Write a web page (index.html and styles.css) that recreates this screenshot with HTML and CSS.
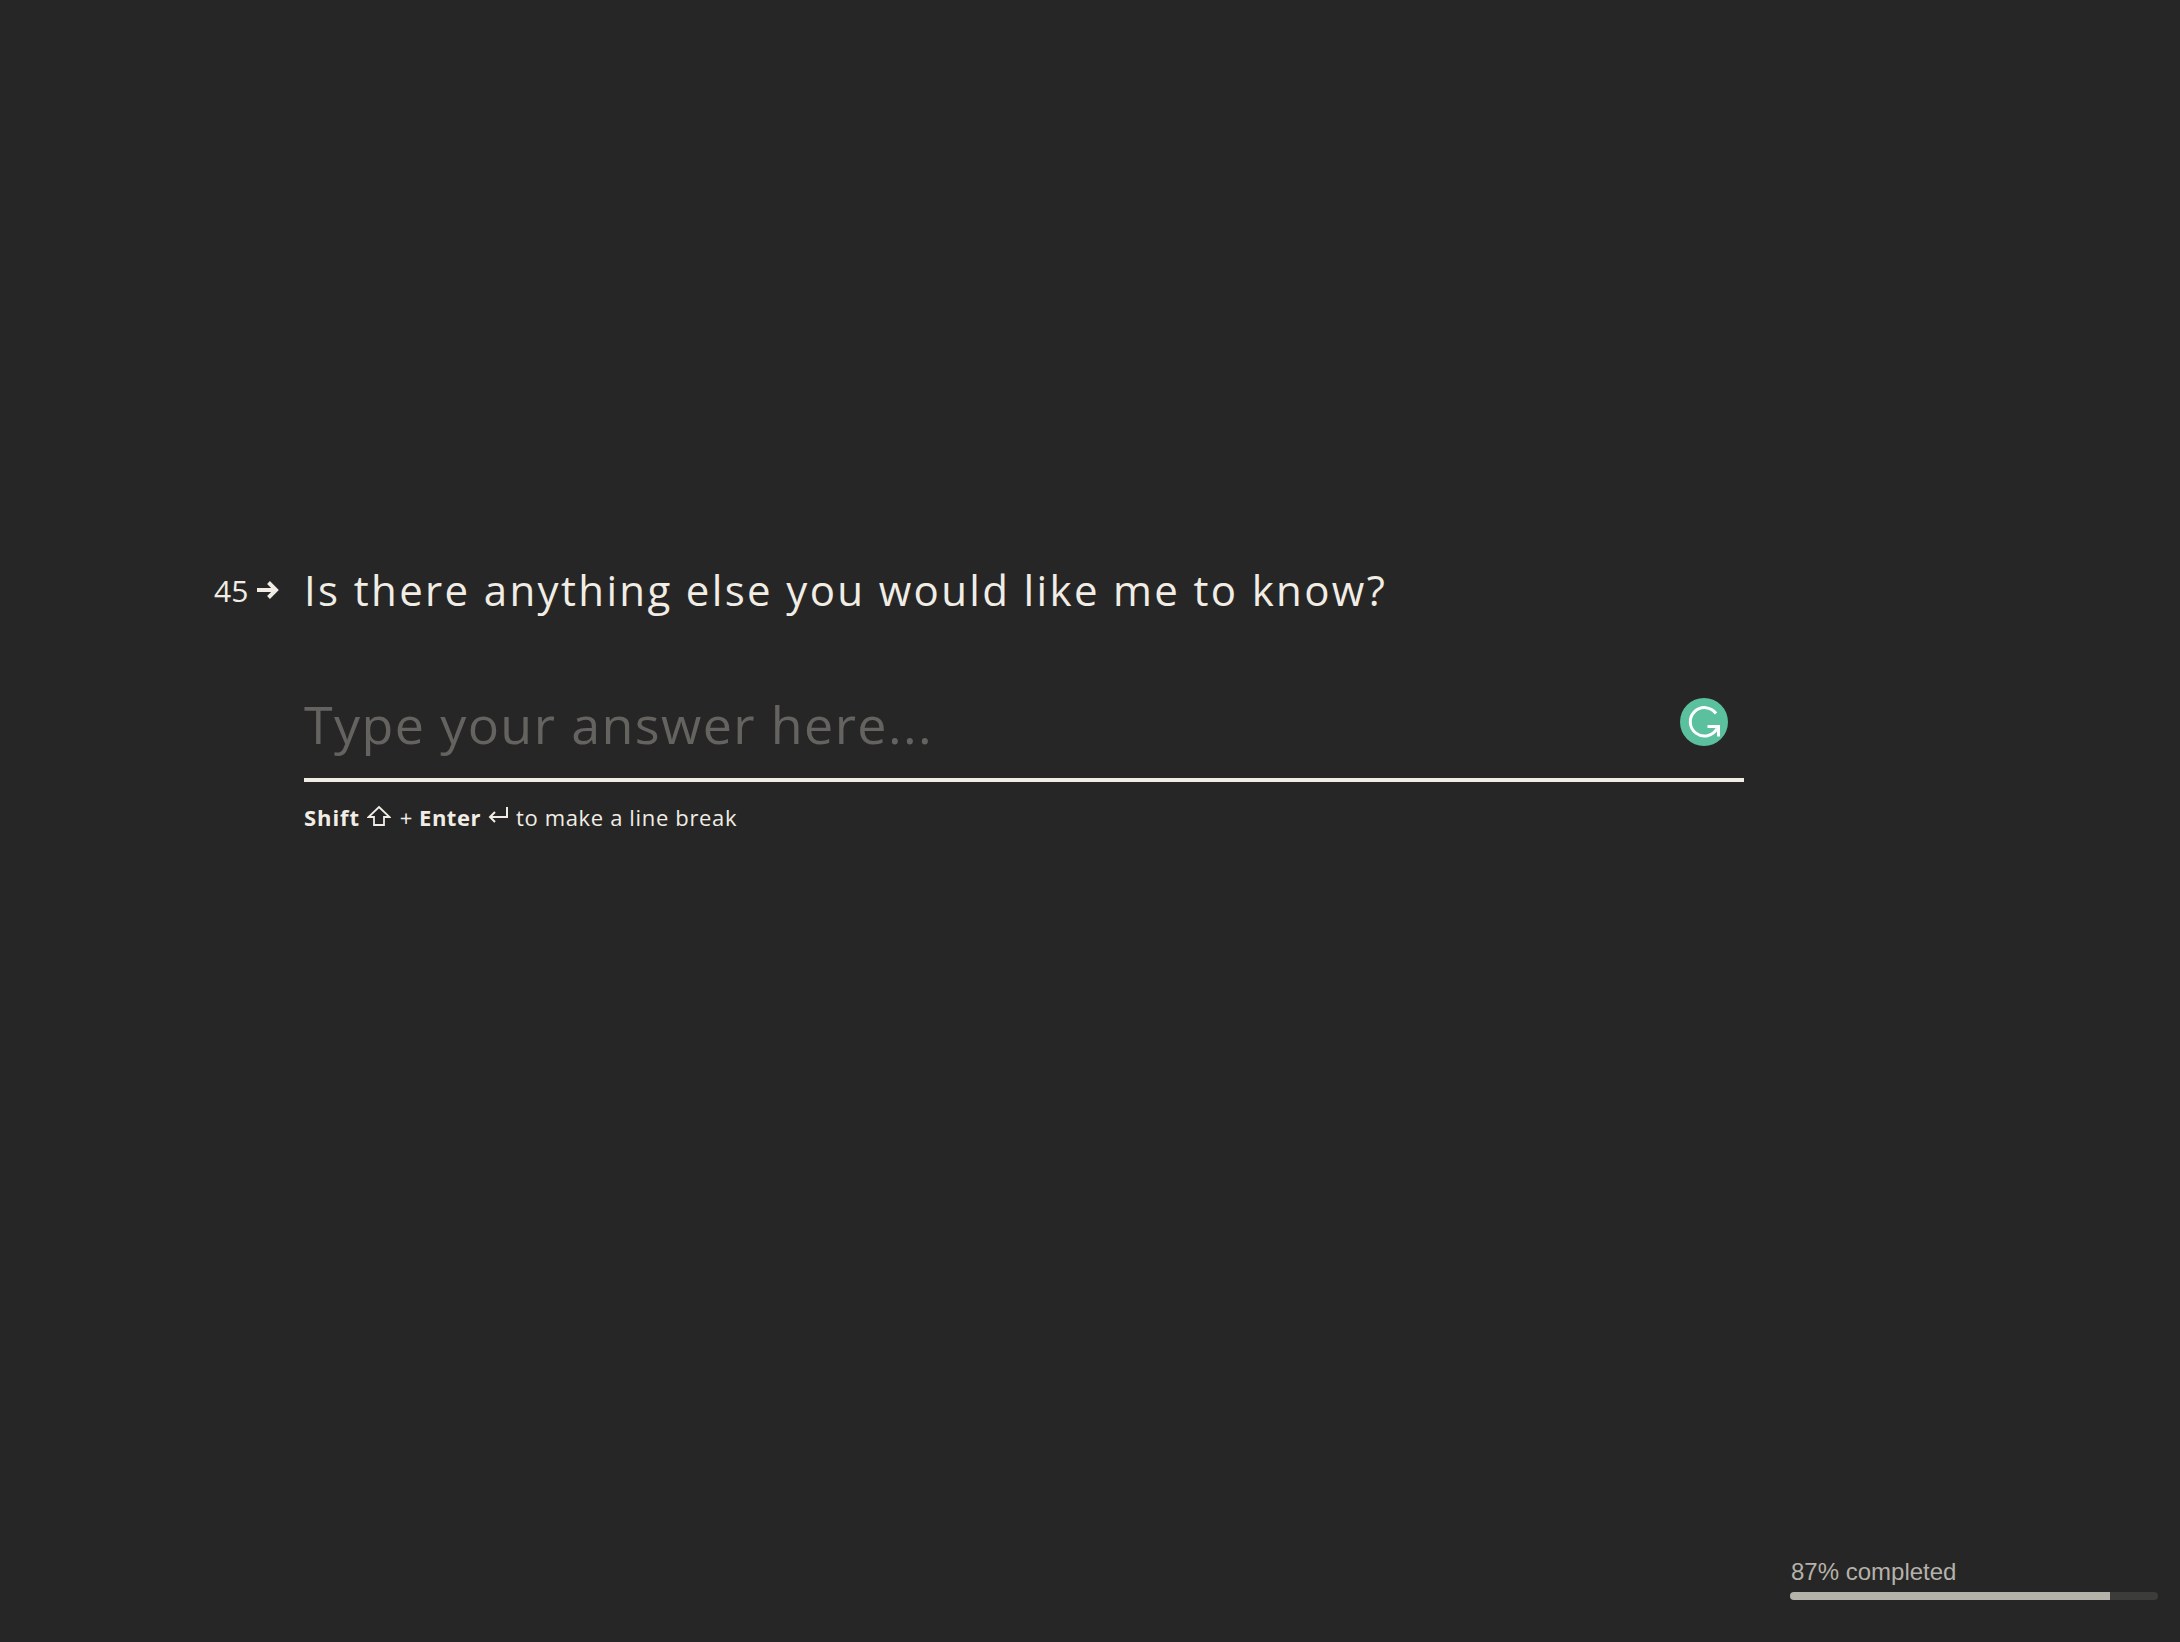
FILE: index.html
```html
<!DOCTYPE html>
<html lang="en">
<head>
<meta charset="utf-8">
<title>Question 45</title>
<link rel="stylesheet" href="styles.css">
</head>
<body>
<main class="form">
  <div class="question-row">
    <div class="number">
      <span>45</span>
      <svg class="arrow" width="23" height="20" viewBox="0 0 23 20" aria-hidden="true"><path d="M1 10h19M12.500 2.500l7.500 7.500-7.500 7.500" fill="none" stroke="#f1ede5" stroke-width="4"/></svg>
    </div>
    <h1 class="question">Is there anything else you would like me to know?</h1>
  </div>
  <div class="answer">
    <div class="input">
      <span class="placeholder">Type your answer here...</span>
      <svg class="grammarly" width="48" height="48" viewBox="0 0 48 48" aria-hidden="true">
        <circle cx="24" cy="24" r="24" fill="#5ac09d"/>
        <path d="M36 15.5A14.2 14.2 0 1 0 37 30.5" fill="none" stroke="#fff" stroke-width="3"/>
        <path d="M27.5 28.5H38.5V38.5" fill="none" stroke="#fff" stroke-width="3"/>
      </svg>
    </div>
    <p class="hint">
      <b>Shift</b>
      <svg class="key" width="24" height="22" viewBox="0 0 24 22" aria-hidden="true"><path d="M12 2 L22.500 12H17V20H7V12H1.500Z" fill="none" stroke="#f1ede5" stroke-width="1.800"/></svg>
      <span class="plus">+</span>
      <b class="enter">Enter</b>
      <svg class="key key-return" width="22" height="20" viewBox="0 0 22 20" aria-hidden="true"><path d="M20 1V11H3M8 6l-5 5 5 5" fill="none" stroke="#f1ede5" stroke-width="2"/></svg>
      <span>to make a line break</span>
    </p>
  </div>
</main>
<aside class="progress">
  <div class="progress-label">87% completed</div>
  <div class="track"><div class="fill" style="width:87%"></div></div>
</aside>
</body>
</html>
```
FILE: styles.css
```css
* { box-sizing: border-box; }
html, body { margin: 0; height: 100%; }
body {
  background: #262626;
  color: #f1ede5;
  font-family: "Open Sans", sans-serif;
  min-height: 1642px;
  position: relative;
}
.form { padding: 558px 0 0 214px; width: 1744px; }
.question-row { display: flex; align-items: center; }
.number {
  width: 90px;
  display: flex;
  align-items: center;
  gap: 8px;
  font-size: 30px;
  font-weight: 400;
}
.arrow { display: block; }
.question {
  margin: 0;
  font-size: 42px;
  font-weight: 400;
  line-height: 64px;
  letter-spacing: 2.35px;
}
.answer { margin: 52px 0 0 90px; }
.input {
  display: flex;
  align-items: center;
  justify-content: space-between;
  height: 108px;
  border-bottom: 4px solid #f1ede5;
  padding-right: 16px;
}
.placeholder {
  font-size: 52px;
  font-weight: 400;
  letter-spacing: 1.4px;
  color: #65635f;
  margin-top: -6px;
}
.grammarly { display: block; margin-top: -8px; }
.hint {
  margin: 20px 0 0;
  display: flex;
  align-items: center;
  gap: 7px;
  font-size: 22px;
  line-height: 30px;
  letter-spacing: 0.65px;
}
.hint b { font-weight: 700; letter-spacing: 0.9px; }
.hint .enter { letter-spacing: 0.5px; }
.plus { margin: 0 -1px 0 2px; }
.key { display: block; margin-top: -2px; }
.key-return { margin-left: -1px; }
.progress {
  position: absolute;
  left: 1790px;
  top: 1557px;
  width: 368px;
}
.progress-label {
  font-family: "Liberation Sans", Arial, sans-serif;
  font-size: 24px;
  line-height: 30px;
  color: #b5b2aa;
  padding-left: 1px;
}
.track {
  margin-top: 5px;
  height: 8px;
  border-radius: 4px;
  background: #3c3c3b;
  overflow: hidden;
}
.fill { height: 100%; background: #b5b2aa; }
```
